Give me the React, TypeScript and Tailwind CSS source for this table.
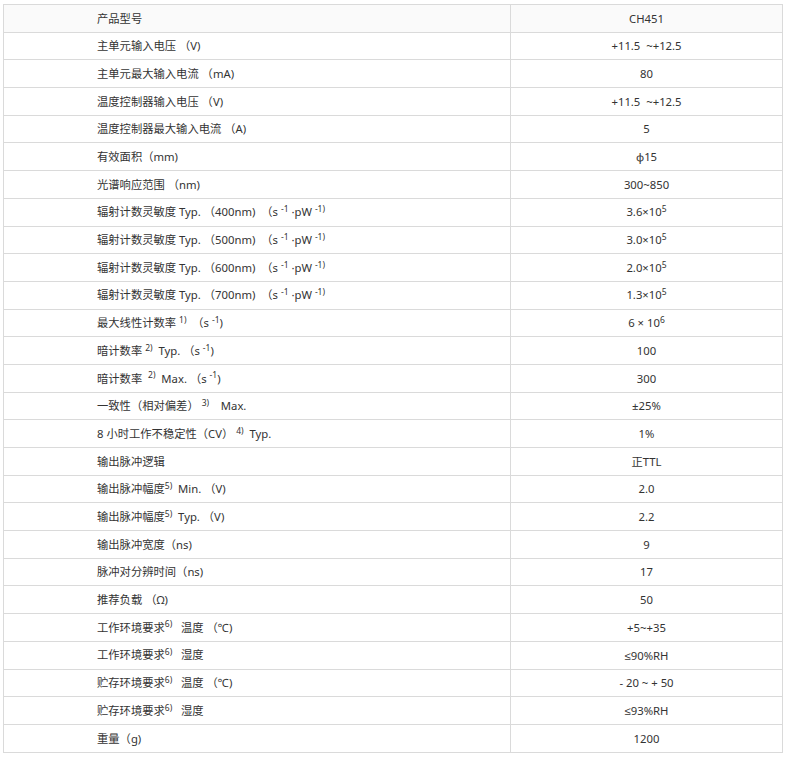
import React from "react";

// Spec table for the CH451 photon counter module.
const S = ({ children }: { children: React.ReactNode }) => (
  <sup className="text-[8.5px] leading-none">{children}</sup>
);

const sens = (nm: string) => (
  <>
    辐射计数灵敏度 Typ. （{nm}) &nbsp;（s <S>-1</S> ·pW <S>-1)</S>
  </>
);

const rows: [React.ReactNode, React.ReactNode][] = [
  [<>主单元输入电压 （V)</>, <>+11.5 &nbsp;~+12.5</>],
  [<>主单元最大输入电流 （mA)</>, "80"],
  [<>温度控制器输入电压 （V)</>, <>+11.5 &nbsp;~+12.5</>],
  [<>温度控制器最大输入电流 （A)</>, "5"],
  [<>有效面积（mm)</>, "φ15"],
  [<>光谱响应范围 （nm)</>, "300~850"],
  [sens("400nm"), <>3.6×10<S>5</S></>],
  [sens("500nm"), <>3.0×10<S>5</S></>],
  [sens("600nm"), <>2.0×10<S>5</S></>],
  [sens("700nm"), <>1.3×10<S>5</S></>],
  [<>最大线性计数率 <S>1)</S> &nbsp;（s <S>-1</S>)</>, <>6 × 10<S>6</S></>],
  [<>暗计数率 <S>2)</S>&nbsp; Typ. （s <S>-1</S>)</>, "100"],
  [<>暗计数率 &nbsp;<S>2)</S>&nbsp; Max. （s <S>-1</S>)</>, "300"],
  [<>一致性（相对偏差） <S>3)</S>&nbsp;&nbsp;&nbsp; Max.</>, "±25%"],
  [<>8 小时工作不稳定性（CV） <S>4)</S>&nbsp; Typ.</>, "1%"],
  [<>输出脉冲逻辑</>, "正TTL"],
  [<>输出脉冲幅度<S>5)</S>&nbsp; Min. （V)</>, "2.0"],
  [<>输出脉冲幅度<S>5)</S>&nbsp; Typ. （V)</>, "2.2"],
  [<>输出脉冲宽度（ns)</>, "9"],
  [<>脉冲对分辨时间（ns)</>, "17"],
  [<>推荐负载 （Ω)</>, "50"],
  [<>工作环境要求<S>6)</S>&nbsp;&nbsp; 温度 （℃)</>, "+5~+35"],
  [<>工作环境要求<S>6)</S>&nbsp;&nbsp; 湿度</>, "≤90%RH"],
  [<>贮存环境要求<S>6)</S>&nbsp;&nbsp; 温度 （℃)</>, "- 20 ~ + 50"],
  [<>贮存环境要求<S>6)</S>&nbsp;&nbsp; 湿度</>, "≤93%RH"],
  [<>重量（g)</>, "1200"],
];

const cell = "h-[27.7px] border border-[#dadada] p-0 leading-none whitespace-nowrap";

export default function App() {
  return (
    <div className="bg-white px-[3px] pt-[4px] pb-[5px] text-[11.3px] text-[#333] [font-family:'Noto_Sans','Liberation_Sans','Noto_Sans_CJK_SC',sans-serif]">
      <table className="w-[780px] table-fixed border-collapse">
        <colgroup>
          <col className="w-[507px]" />
          <col />
        </colgroup>
        <tbody>
          <tr className="bg-[#fafafa]">
            <td className={`${cell} pl-[93px]`}>产品型号</td>
            <td className={`${cell} text-center`}>CH451</td>
          </tr>
          {rows.map(([label, value], i) => (
            <tr key={i}>
              <td className={`${cell} pl-[93px]`}>{label}</td>
              <td className={`${cell} text-center`}>{value}</td>
            </tr>
          ))}
        </tbody>
      </table>
    </div>
  );
}
